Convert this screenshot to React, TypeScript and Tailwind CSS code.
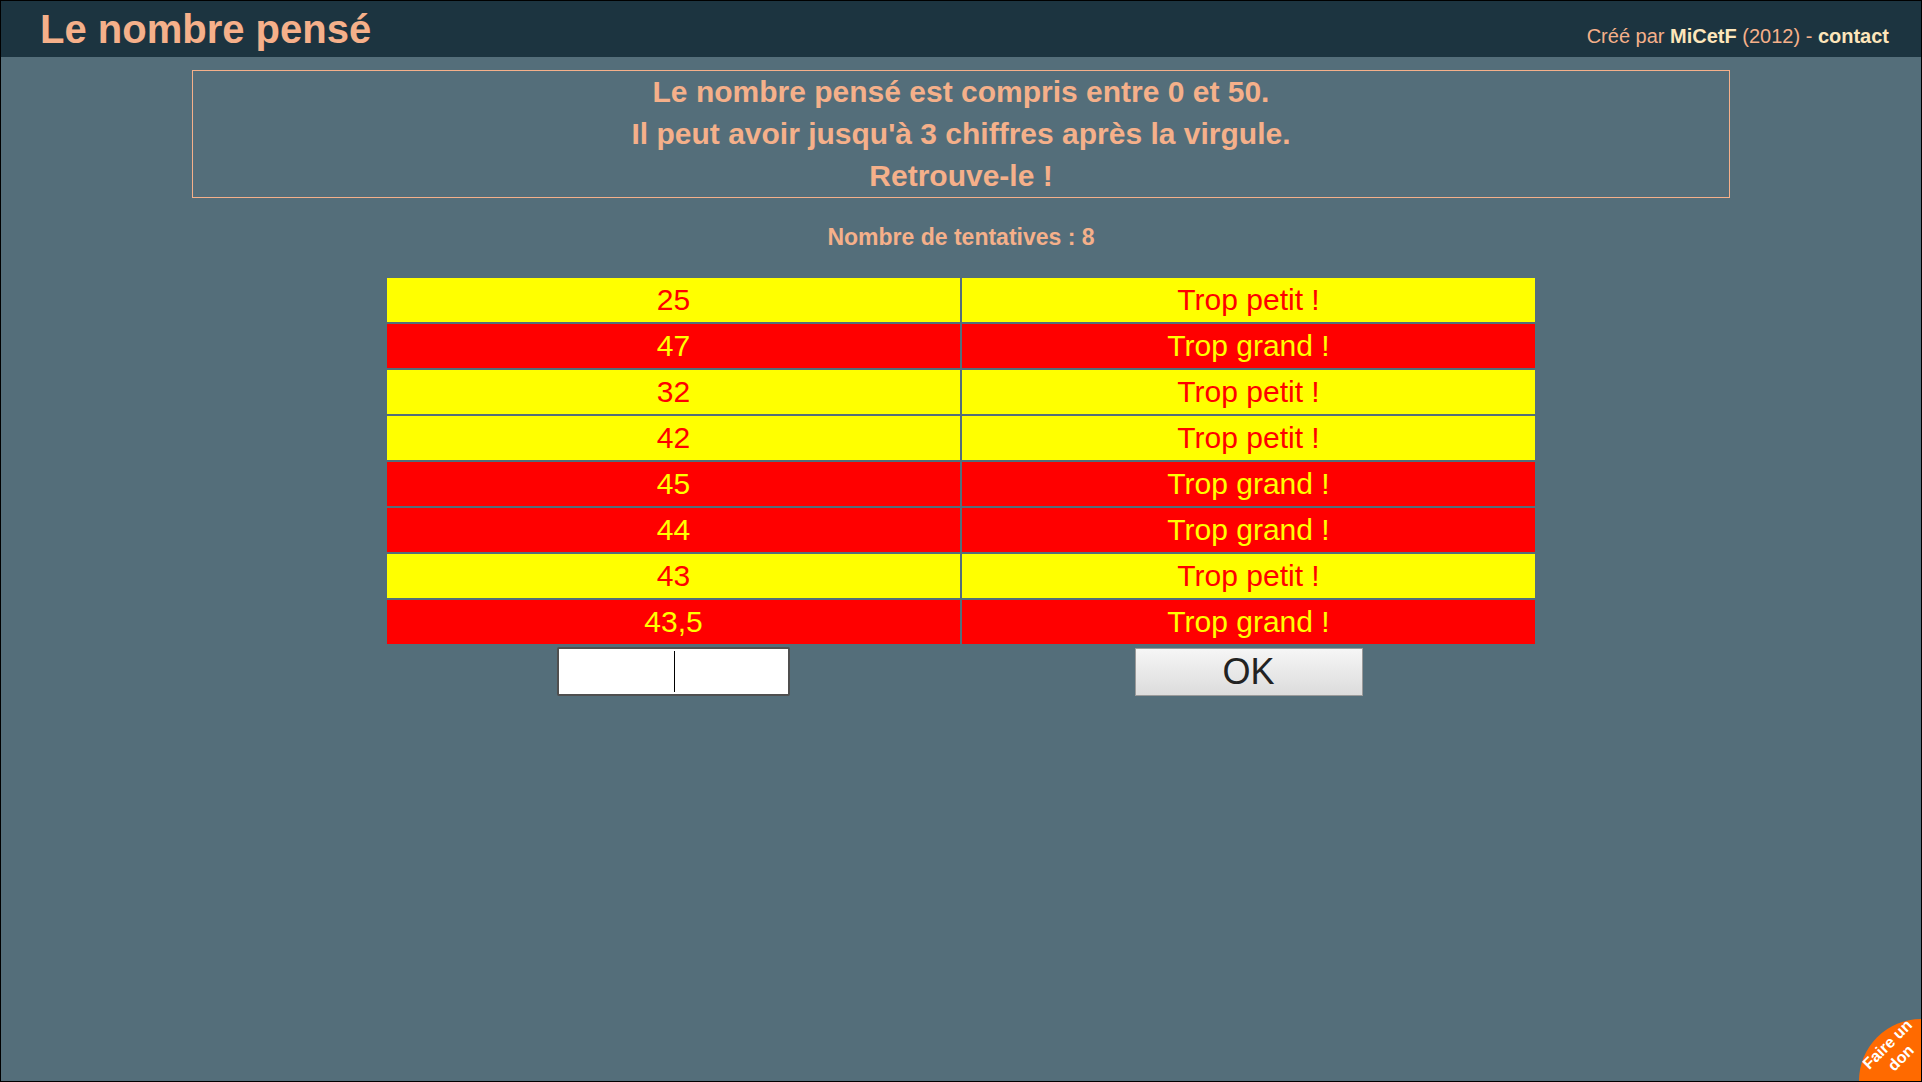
import React from "react";

const rows: { n: string; msg: string; small: boolean }[] = [
  { n: "25", msg: "Trop petit !", small: true },
  { n: "47", msg: "Trop grand !", small: false },
  { n: "32", msg: "Trop petit !", small: true },
  { n: "42", msg: "Trop petit !", small: true },
  { n: "45", msg: "Trop grand !", small: false },
  { n: "44", msg: "Trop grand !", small: false },
  { n: "43", msg: "Trop petit !", small: true },
  { n: "43,5", msg: "Trop grand !", small: false },
];

export default function App() {
  return (
    <div
      className="relative w-[1922px] h-[1082px] overflow-hidden border border-black bg-[#546e7a]"
      style={{ fontFamily: '"Liberation Sans", Arial, sans-serif' }}
    >
      {/* Header */}
      <div className="h-[56px] bg-[#1c3440] flex items-baseline justify-between pl-[39px] pr-[32px] pt-[5px]">
        <div className="text-[40px] leading-[46px] font-bold text-[#f5b08a]">Le nombre pensé</div>
        <div className="text-[20px] text-[#f5b08a]">
          Créé par <span className="font-bold text-[#fde6bb]">MiCetF</span> (2012) -{" "}
          <span className="font-bold text-[#fde6bb]">contact</span>
        </div>
      </div>

      {/* Instruction box */}
      <div className="mt-[13px] mx-auto w-[1538px] border border-[#f5b08a] text-center text-[30px] leading-[42px] font-bold text-[#f5b08a]">
        <div>Le nombre pensé est compris entre 0 et 50.</div>
        <div>Il peut avoir jusqu'à 3 chiffres après la virgule.</div>
        <div>Retrouve-le !</div>
      </div>

      <p className="mt-[26px] text-center text-[23px] leading-[26px] font-bold text-[#f5b08a]">
        Nombre de tentatives : 8
      </p>

      <table className="mt-[26px] mx-auto w-[1152px] border-separate border-spacing-[2px] text-[30px] leading-[34px]">
        <tbody>
          {rows.map((r, i) => (
            <tr key={i}>
              <td
                className={
                  "w-[573px] h-[44px] p-0 text-center align-middle " +
                  (r.small ? "bg-[#ffff00] text-[#ff0000]" : "bg-[#ff0000] text-[#ffff00]")
                }
              >
                {r.n}
              </td>
              <td
                className={
                  "w-[573px] h-[44px] p-0 text-center align-middle " +
                  (r.small ? "bg-[#ffff00] text-[#ff0000]" : "bg-[#ff0000] text-[#ffff00]")
                }
              >
                {r.msg}
              </td>
            </tr>
          ))}
          <tr>
            <td className="py-[1px] px-0 text-center align-middle">
              <div className="relative inline-block align-middle">
                <input
                  type="text"
                  className="block w-[233px] h-[49px] bg-white border-2 border-[#4f4f4f] rounded-[2px] text-center text-[30px] caret-transparent outline-none"
                  defaultValue=""
                />
                <span className="absolute left-1/2 top-[4px] w-px h-[41px] bg-black" />
              </div>
            </td>
            <td className="py-[1px] px-0 text-center align-middle">
              <button className="inline-block align-middle w-[228px] h-[48px] border border-[#9a9a9a] bg-gradient-to-b from-[#f6f6f6] to-[#dcdcdc] text-[36px] leading-none text-[#222222]">
                OK
              </button>
            </td>
          </tr>
        </tbody>
      </table>

      {/* Donate badge */}
      <div className="absolute right-[-62px] bottom-[-62px] w-[124px] h-[124px] rounded-full bg-[#ff6a00]" />
      <div className="absolute right-[-16px] bottom-[11px] w-[86px] h-[38px] -rotate-45 text-center text-[16px] leading-[19px] font-bold text-white">
        <div>Faire un</div>
        <div>don</div>
      </div>
    </div>
  );
}
